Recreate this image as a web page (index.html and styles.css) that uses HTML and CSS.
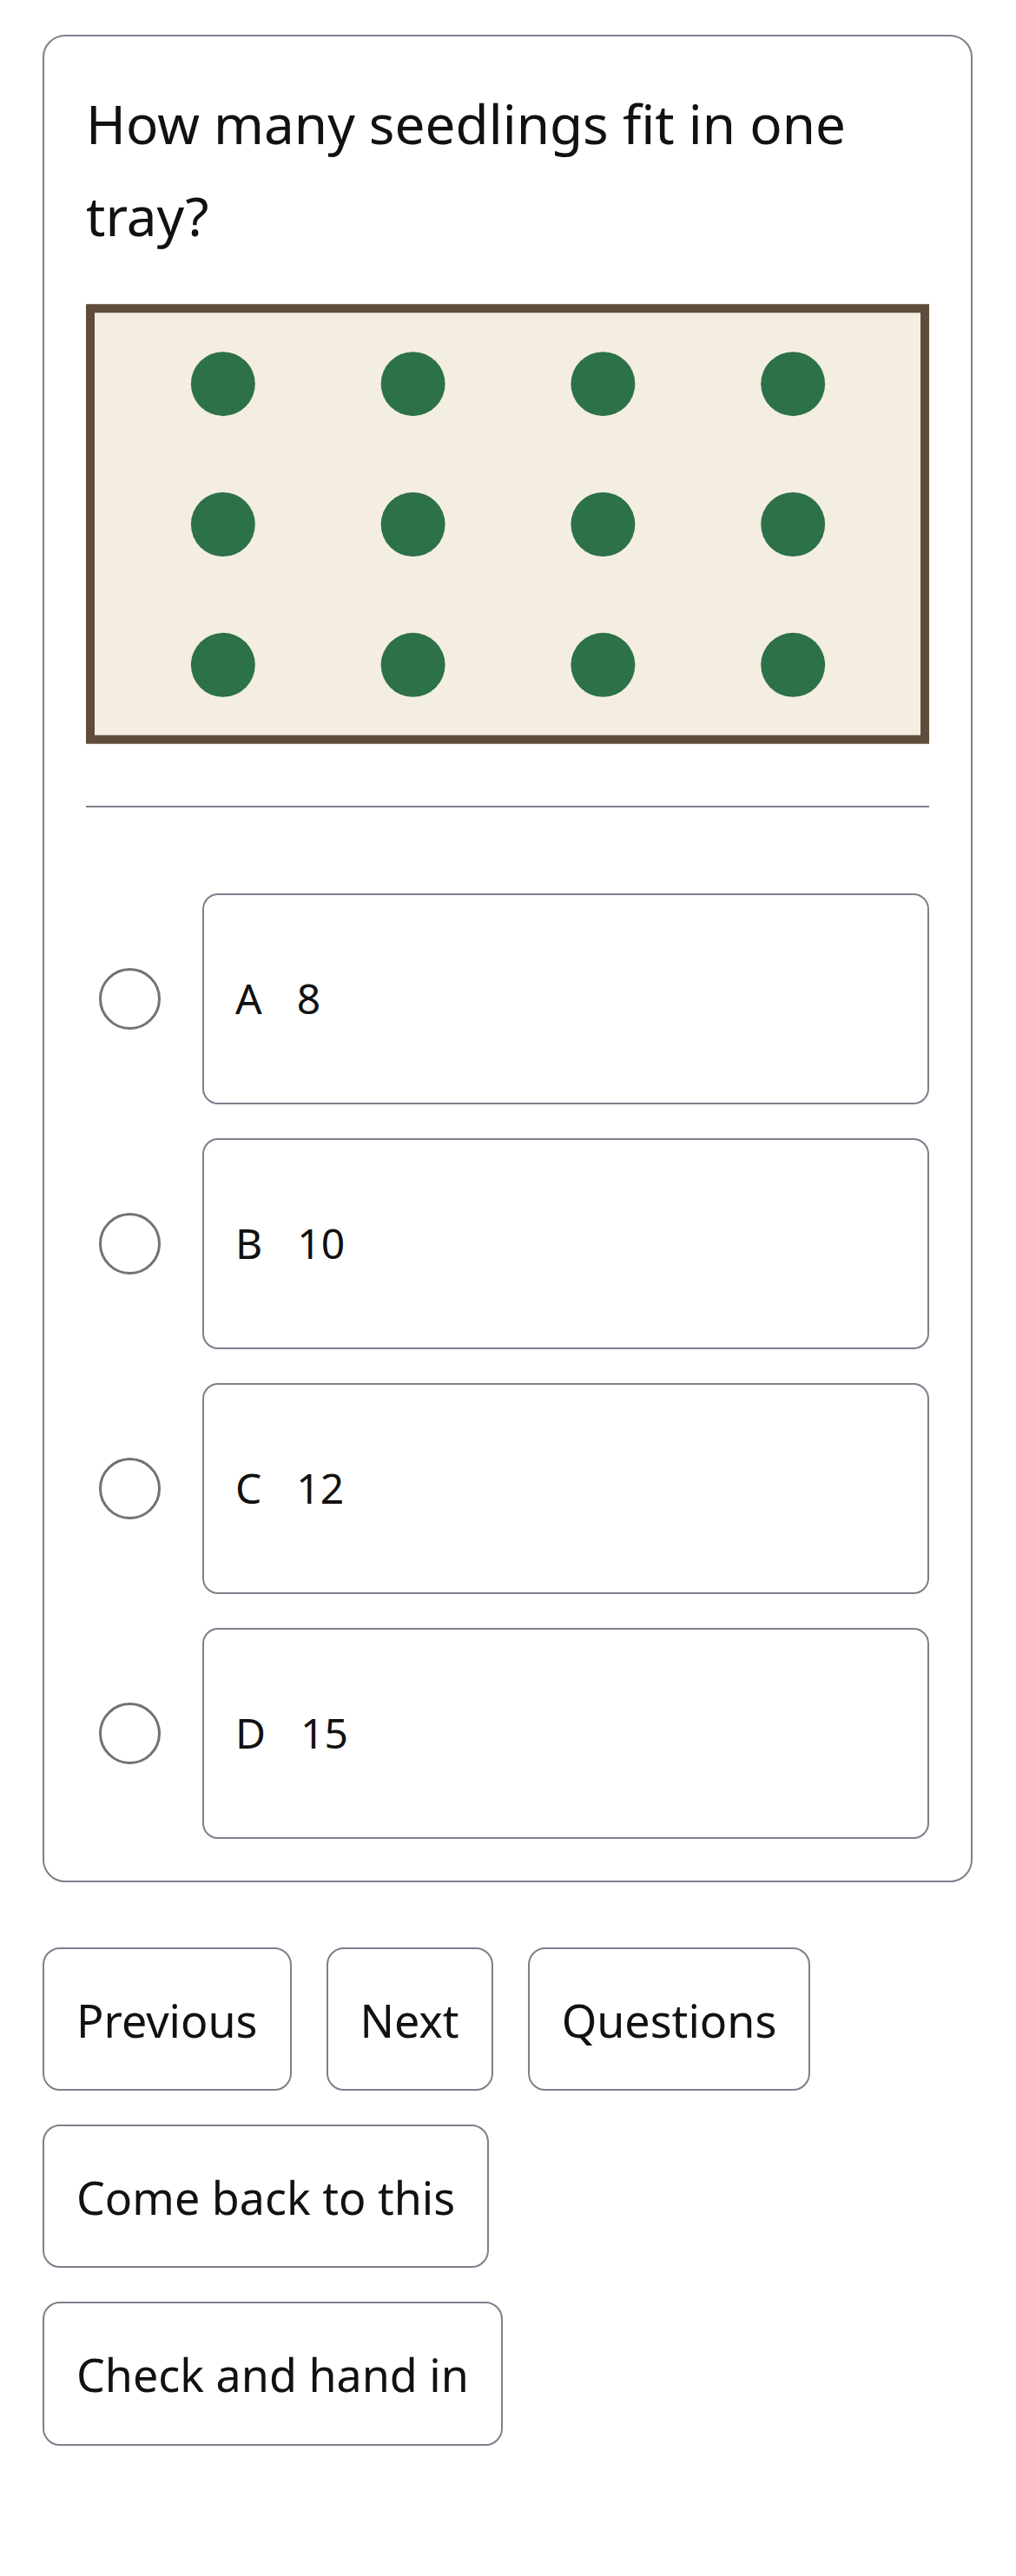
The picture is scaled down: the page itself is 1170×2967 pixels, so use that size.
FILE: index.html
```html
<!DOCTYPE html>
<html lang="en">
<head>
<meta charset="utf-8">
<title>Question</title>
<link rel="stylesheet" href="styles.css">
</head>
<body>
<main class="page">
  <section class="card">
    <h1 class="question">How many seedlings fit in one tray?</h1>
    <svg class="tray" viewBox="0 0 972 507" width="972" height="507" aria-hidden="true">
      <rect x="5" y="5" width="962" height="497" fill="#f4eee1" stroke="#5e4d3d" stroke-width="10"/>
      <g fill="#2d7149">
        <circle cx="158" cy="92" r="37"/><circle cx="377" cy="92" r="37"/><circle cx="596" cy="92" r="37"/><circle cx="815" cy="92" r="37"/>
        <circle cx="158" cy="254" r="37"/><circle cx="377" cy="254" r="37"/><circle cx="596" cy="254" r="37"/><circle cx="815" cy="254" r="37"/>
        <circle cx="158" cy="416" r="37"/><circle cx="377" cy="416" r="37"/><circle cx="596" cy="416" r="37"/><circle cx="815" cy="416" r="37"/>
      </g>
    </svg>
    <hr class="divider">
    <ul class="options">
      <li class="option"><span class="radio"></span><div class="choice"><span class="letter">A</span><span class="value">8</span></div></li>
      <li class="option"><span class="radio"></span><div class="choice"><span class="letter">B</span><span class="value">10</span></div></li>
      <li class="option"><span class="radio"></span><div class="choice"><span class="letter">C</span><span class="value">12</span></div></li>
      <li class="option"><span class="radio"></span><div class="choice"><span class="letter">D</span><span class="value">15</span></div></li>
    </ul>
  </section>
  <nav class="actions">
    <div class="action-row">
      <button class="btn">Previous</button>
      <button class="btn">Next</button>
      <button class="btn">Questions</button>
    </div>
    <div class="action-row">
      <button class="btn">Come back to this</button>
    </div>
    <div class="action-row">
      <button class="btn">Check and hand in</button>
    </div>
  </nav>
</main>
</body>
</html>
```
FILE: styles.css
```css
* { box-sizing: border-box; }
html, body { margin: 0; padding: 0; background: #ffffff; }
body {
  font-family: "Noto Sans", "Open Sans", sans-serif;
  color: #111111;
}
.page {
  padding: 40px 50px 40px 49px;
}
.card {
  border: 2px solid #7f7e8b;
  border-radius: 26px;
  padding: 47px 48px 48px 48px;
}
.question {
  margin: 0 0 49px 0;
  font-size: 62px;
  line-height: 106px;
  font-weight: 400;
}
.tray {
  display: block;
  width: 100%;
  height: 507px;
}
.divider {
  margin: 71px 0 0 0;
  border: 0;
  height: 2px;
  background: #7f7e8b;
}
.options {
  list-style: none;
  margin: 99px 0 0 0;
  padding: 0;
  display: flex;
  flex-direction: column;
  gap: 39px;
}
.option {
  display: flex;
  align-items: center;
  gap: 48px;
}
.radio {
  flex: none;
  width: 71px;
  height: 71px;
  margin-left: 15px;
  border: 3px solid #727272;
  border-radius: 50%;
}
.choice {
  flex: 1;
  height: 243px;
  display: flex;
  align-items: center;
  gap: 40px;
  padding: 0 36px;
  border: 2px solid #7f7e8b;
  border-radius: 18px;
  font-size: 48px;
  line-height: 1.6;
}
.actions {
  margin-top: 75px;
  display: flex;
  flex-direction: column;
  gap: 39px;
}
.action-row {
  display: flex;
  gap: 40px;
}
.btn {
  font-family: "Noto Sans", "Open Sans", sans-serif;
  font-size: 52px;
  line-height: 1.6;
  color: #111111;
  background: #ffffff;
  border: 2px solid #7f7e8b;
  border-radius: 20px;
  padding: 40px 37px 38px 37px;
  margin: 0;
}
```
